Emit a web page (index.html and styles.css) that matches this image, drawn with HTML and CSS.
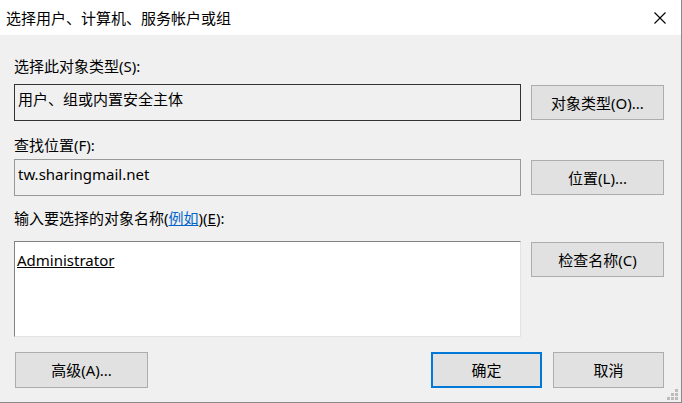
FILE: index.html
```html
<!DOCTYPE html>
<html lang="zh-CN">
<head>
    <meta charset="UTF-8">
    <meta name="viewport" content="width=device-width, initial-scale=1.0">
    <title>选择用户、计算机、服务帐户或组</title>
    <link rel="stylesheet" href="styles.css">
</head>
<body>
    <div class="dialog">
        <div class="titlebar">
            <span class="title">选择用户、计算机、服务帐户或组</span>
            <svg class="close" width="12" height="12" viewBox="0 0 12 12">
                <path d="M0.5 0.5 L11.5 11.5 M11.5 0.5 L0.5 11.5" stroke="#000" stroke-width="1.1" fill="none"/>
            </svg>
        </div>

        <div class="content">
            <div class="label label-first">选择此对象类型(S):</div>
            <div class="row">
                <div class="field field-dark">用户、组或内置安全主体</div>
                <button class="btn btn-side">对象类型(O)...</button>
            </div>

            <div class="label label-second">查找位置(F):</div>
            <div class="row">
                <div class="field field-gray">tw.sharingmail.net</div>
                <button class="btn btn-side">位置(L)...</button>
            </div>

            <div class="label label-third">输入要选择的对象名称(<a href="#" class="link">例如</a>)(<u>E</u>):</div>
            <div class="row">
                <div class="field field-edit"><u>Administrator</u></div>
                <button class="btn btn-side">检查名称(C)</button>
            </div>

            <div class="row bottom-row">
                <button class="btn btn-advanced">高级(A)...</button>
                <div class="actions">
                    <button class="btn btn-action btn-default">确定</button>
                    <button class="btn btn-action">取消</button>
                </div>
            </div>
        </div>

        <!-- 右下角拖动手柄 -->
        <svg class="grip" width="11" height="11" viewBox="0 0 11 11">
            <rect x="8" y="0" width="3" height="3" fill="#bcbcbc"/>
            <rect x="4" y="4" width="3" height="3" fill="#bcbcbc"/>
            <rect x="8" y="4" width="3" height="3" fill="#bcbcbc"/>
            <rect x="0" y="8" width="3" height="3" fill="#bcbcbc"/>
            <rect x="4" y="8" width="3" height="3" fill="#bcbcbc"/>
            <rect x="8" y="8" width="3" height="3" fill="#bcbcbc"/>
        </svg>
    </div>
</body>
</html>
```

FILE: styles.css
```css
body {
    margin: 0;
    background-color: #f0f0f0;
    font-family: "Noto Sans", "Noto Sans CJK SC", sans-serif;
    font-size: 15px;
    color: #000;
}
.dialog {
    position: relative;
    width: 682px;
    height: 403px;
    box-sizing: border-box;
    border-right: 1px solid #8a8a8a;
    border-bottom: 1px solid #8a8a8a;
    background-color: #f0f0f0;
}
.titlebar {
    height: 35px;
    background-color: #ffffff;
    display: flex;
    align-items: center;
    justify-content: space-between;
    padding-left: 6px;
}
.title {
    line-height: 20px;
}
.close {
    margin-right: 15px;
}
.content {
    padding: 21px 17px 0 14px;
}
.label {
    height: 20px;
    line-height: 20px;
    white-space: nowrap;
}
.label-first {
    margin-bottom: 8px;
}
.label-second {
    margin-top: 14px;
    margin-bottom: 4px;
}
.label-third {
    margin-top: 12px;
    margin-bottom: 13px;
}
.link {
    color: #0066cc;
}
.row {
    display: flex;
    justify-content: space-between;
    align-items: flex-start;
}
.field {
    width: 507px;
    height: 37px;
    box-sizing: border-box;
    padding: 4px 3px;
    line-height: 20px;
    white-space: nowrap;
}
.field-dark {
    border: 1px solid #333333;
}
.field-gray {
    border: 1px solid #999999;
}
.field-edit {
    height: 96px;
    padding: 8px 2px;
    background-color: #ffffff;
    border: 1px solid;
    border-color: #828282 #e3e3e3 #e3e3e3 #828282;
}
.btn {
    font-family: inherit;
    font-size: 15px;
    line-height: 20px;
    color: #000;
    background-color: #e1e1e1;
    border: 1px solid #adadad;
    border-radius: 0;
    padding: 0;
    box-sizing: border-box;
    display: flex;
    align-items: center;
    justify-content: center;
}
.btn-side {
    width: 133px;
    height: 35px;
    margin-top: 1px;
}
.bottom-row {
    margin-top: 15px;
}
.btn-advanced {
    width: 133px;
    height: 36px;
    margin-left: 1px;
}
.actions {
    display: flex;
    gap: 11px;
}
.btn-action {
    width: 111px;
    height: 36px;
}
.btn-default {
    border: 2px solid #0078d7;
}
.grip {
    position: absolute;
    right: 3px;
    bottom: 2px;
}
```
